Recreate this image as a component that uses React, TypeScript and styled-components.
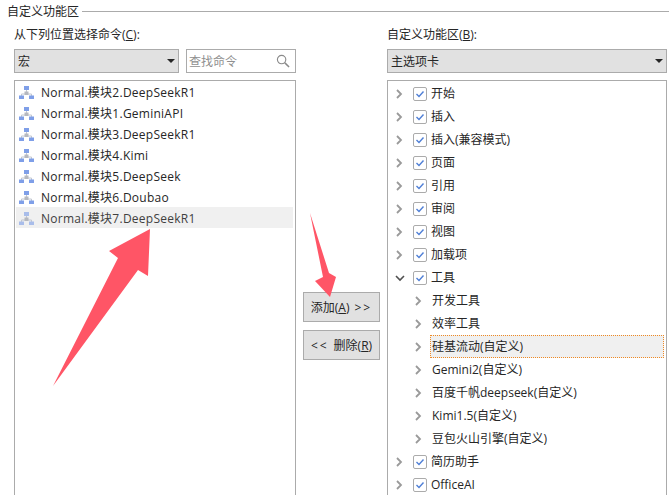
import React from 'react';
import {FC} from 'react';
import styled, {createGlobalStyle} from "styled-components";

const GlobalStyle = createGlobalStyle`
html, body {
    margin: 0;
    padding: 0;
    background: #fff;
    overflow: hidden;
}
body {
    font-family: "Open Sans", "Noto Sans CJK SC", sans-serif;
    font-size: 12px;
    color: #262626;
}
`
const Page = styled.div`
position: relative;
width: 669px;
height: 495px;
overflow: hidden;
padding: 3px 0 0 7px;
box-sizing: border-box;
`
const Legend = styled.div`
display: flex;
align-items: center;
gap: 3px;
height: 17px;
line-height: 17px;
`
const LegendLine = styled.div`
flex: 1;
height: 1px;
background: #ababab;
`
const Columns = styled.div`
display: flex;
margin: 6px 0 0 7px;
`
const LeftColumn = styled.div`
width: 282px;
flex: none;
`
const RightColumn = styled.div`
width: 280px;
flex: none;
`
const Label = styled.div`
height: 17px;
line-height: 17px;
margin-bottom: 6px;
`
const Controls = styled.div`
display: flex;
gap: 7px;
margin-bottom: 7px;
`
const Select = styled.div<{$width: number}>`
width: ${({$width}) => $width}px;
height: 24px;
box-sizing: border-box;
display: flex;
align-items: center;
justify-content: space-between;
padding: 0 3px 0 3px;
background: #e1e1e1;
border: 1px solid #ababab;
`
const Caret = styled.div`
width: 0;
height: 0;
border-left: 4px solid transparent;
border-right: 4px solid transparent;
border-top: 4px solid #262626;
`
const Search = styled.div`
width: 110px;
height: 24px;
box-sizing: border-box;
display: flex;
align-items: center;
justify-content: space-between;
padding: 0 5px 0 2px;
border: 1px solid #ababab;
color: #8f8f8f;
`
const ListBox = styled.div`
height: 430px;
box-sizing: border-box;
border: 1px solid #ababab;
padding: 0 1px;
`
const CommandRow = styled.div<{$selected?: boolean}>`
display: flex;
align-items: center;
gap: 7px;
height: 21px;
width: 277px;
padding-left: 3px;
box-sizing: border-box;
letter-spacing: 0.25px;
background: ${({$selected}) => $selected ? "#f0f0f0" : "transparent"};
color: ${({$selected}) => $selected ? "#404040" : "#262626"};
`
const MiddleColumn = styled.div`
width: 91px;
flex: none;
padding: 266px 0 0 7px;
box-sizing: border-box;
display: flex;
flex-direction: column;
gap: 8px;
`
const ActionButton = styled.div`
width: 77px;
height: 30px;
box-sizing: border-box;
display: flex;
align-items: center;
justify-content: center;
gap: 5px;
background: #e1e1e1;
border: 1px solid #ababab;
`
const ButtonArrows = styled.span`
letter-spacing: 2px;
`
const TreeBox = styled.div`
height: 430px;
box-sizing: border-box;
border: 1px solid #ababab;
padding-top: 1px;
`
const TreeRow = styled.div<{$nested?: boolean}>`
display: flex;
align-items: center;
height: 23px;
padding-left: ${({$nested}) => $nested ? "26px" : "7px"};
`
const Chevron = styled.div`
width: 10px;
height: 10px;
flex: none;
display: flex;
margin-right: 8px;
`
const NestedChevron = styled(Chevron)`
margin-right: 6px;
`
const CheckBox = styled.div`
width: 14px;
height: 14px;
flex: none;
box-sizing: border-box;
border: 1px solid #ababab;
border-radius: 2px;
display: flex;
align-items: center;
justify-content: center;
margin-right: 1px;
`
const TreeLabel = styled.div<{$focused?: boolean}>`
flex: ${({$focused}) => $focused ? 1 : "none"};
line-height: 21px;
height: 23px;
box-sizing: border-box;
padding: 0 2px;
margin-right: 2px;
background: ${({$focused}) => $focused ? "#f0f0f0" : "transparent"};
border: 1px dotted ${({$focused}) => $focused ? "#f08a24" : "transparent"};
`
const NestedLabel = styled(TreeLabel)`
padding: 0 1px;
`
const Arrows = styled.svg`
position: absolute;
left: 0;
top: 0;
pointer-events: none;
`

const MacroIcon: FC<{muted?: boolean}> = ({muted}) => (
    <svg width="15" height="14" viewBox="0 0 15 14">
        <path d="M7.500 4v4M2.500 11V9h10v2" stroke="#c2c7d0" fill="none"/>
        <rect x="5" y="1" width="5" height="4" fill={muted ? "#a9bdea" : "#7f9fe8"}/>
        <rect x="5.500" y="6.500" width="4" height="3.500" fill="#b5b8bf"/>
        <rect x="0" y="10.500" width="5" height="3.500" fill={muted ? "#a9bdea" : "#7f9fe8"}/>
        <rect x="10" y="10.500" width="5" height="3.500" fill={muted ? "#a9bdea" : "#7f9fe8"}/>
    </svg>
)

const ChevronRight: FC = () => (
    <svg width="10" height="10" viewBox="0 0 10 10">
        <path d="M2 1l4 4-4 4" stroke="#9a9a9a" strokeWidth="1.800" fill="none"/>
    </svg>
)

const ChevronDown: FC = () => (
    <svg width="10" height="10" viewBox="0 0 10 10">
        <path d="M1 3l4 4 4-4" stroke="#505050" strokeWidth="1.600" fill="none"/>
    </svg>
)

const commands = ["Normal.模块2.DeepSeekR1", "Normal.模块1.GeminiAPI", "Normal.模块3.DeepSeekR1", "Normal.模块4.Kimi", "Normal.模块5.DeepSeek", "Normal.模块6.Doubao", "Normal.模块7.DeepSeekR1"]
const topTabs = ["开始", "插入", "插入(兼容模式)", "页面", "引用", "审阅", "视图", "加载项"]
const toolGroups = ["开发工具", "效率工具", "硅基流动(自定义)", "Gemini2(自定义)", "百度千帆deepseek(自定义)", "Kimi1.5(自定义)", "豆包火山引擎(自定义)"]
const bottomTabs = ["简历助手", "OfficeAI"]

const Check: FC = () => (
    <CheckBox>
        <svg width="10" height="10" viewBox="0 0 10 10">
            <path d="M1.500 5l2.500 2.500 4.500-5" stroke="#4f7fd6" strokeWidth="1.400" fill="none"/>
        </svg>
    </CheckBox>
)

const TabRow: FC<{name: string, open?: boolean}> = ({name, open}) => (
    <TreeRow>
        <Chevron>{open ? <ChevronDown/> : <ChevronRight/>}</Chevron>
        <Check/>
        <TreeLabel>{name}</TreeLabel>
    </TreeRow>
)

const App: FC = () => {
    return (
        <Page>
            <GlobalStyle/>
            <Legend>自定义功能区<LegendLine/></Legend>
            <Columns>
                <LeftColumn>
                    <Label>从下列位置选择命令(<u>C</u>):</Label>
                    <Controls>
                        <Select $width={165}>宏<Caret/></Select>
                        <Search>
                            查找命令
                            <svg width="14" height="14" viewBox="0 0 15 15">
                                <circle cx="6" cy="6" r="4.500" stroke="#8a8a8a" strokeWidth="1.200" fill="none"/>
                                <path d="M9.500 9.500L14 14" stroke="#8a8a8a" strokeWidth="1.600"/>
                            </svg>
                        </Search>
                    </Controls>
                    <ListBox>
                        {commands.map((command, i) => (
                            <CommandRow key={i} $selected={i === 6}>
                                <MacroIcon muted={i === 6}/>
                                <span>{command}</span>
                            </CommandRow>
                        ))}
                    </ListBox>
                </LeftColumn>
                <MiddleColumn>
                    <ActionButton>
                        <span>添加(<u>A</u>)</span>
                        <ButtonArrows>&gt;&gt;</ButtonArrows>
                    </ActionButton>
                    <ActionButton>
                        <ButtonArrows>&lt;&lt;</ButtonArrows>
                        <span>删除(<u>R</u>)</span>
                    </ActionButton>
                </MiddleColumn>
                <RightColumn>
                    <Label>自定义功能区(<u>B</u>):</Label>
                    <Controls>
                        <Select $width={280}>主选项卡<Caret/></Select>
                    </Controls>
                    <TreeBox>
                        {topTabs.map((tab) => <TabRow key={tab} name={tab}/>)}
                        <TabRow name="工具" open/>
                        {toolGroups.map((group, i) => (
                            <TreeRow key={group} $nested>
                                <NestedChevron><ChevronRight/></NestedChevron>
                                <NestedLabel $focused={i === 2}>{group}</NestedLabel>
                            </TreeRow>
                        ))}
                        {bottomTabs.map((tab) => <TabRow key={tab} name={tab}/>)}
                    </TreeBox>
                </RightColumn>
            </Columns>
            <Arrows width="669" height="495" viewBox="0 0 669 495">
                <path d="M53 386L118 258L109 251L150 229L148 276L138 270Z" fill="#ff5566"/>
                <path d="M310 213L329 273L336 277L330 297L315 281L323 277Z" fill="#ff5566"/>
            </Arrows>
        </Page>
    );
};

export default App;
